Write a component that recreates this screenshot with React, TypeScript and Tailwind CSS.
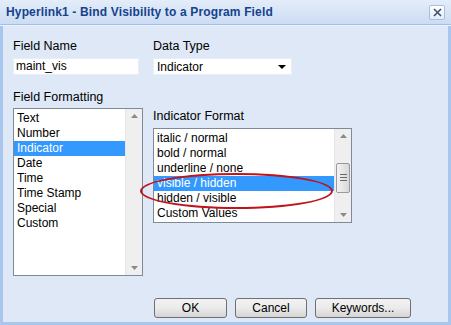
import React from 'react';

const font = { fontFamily: '"Liberation Sans", Arial, sans-serif' };

const UpArrow = () => (
  <svg width="7" height="4" viewBox="0 0 7 4"><path d="M0 4 L3.5 0 L7 4 Z" fill="#8a8a8a" /></svg>
);
const DownArrow = () => (
  <svg width="7" height="4" viewBox="0 0 7 4"><path d="M0 0 L3.5 4 L7 0 Z" fill="#8a8a8a" /></svg>
);

const ListBox: React.FC<{
  items: string[];
  selected: number;
  className: string;
  thumb?: boolean;
}> = ({ items, selected, className, thumb }) => (
  <div className={`flex border border-[#7f8a99] bg-white ${className}`}>
    <div className="flex-1 pt-[2px] overflow-hidden">
      {items.map((t, i) => (
        <div
          key={t}
          className={`h-[15px] leading-[15px] pl-[3px] text-[12px] whitespace-nowrap ${
            i === selected ? 'bg-[#3399ff] text-white' : 'text-black'
          }`}
        >
          {t}
        </div>
      ))}
    </div>
    <div className="w-[17px] bg-[#efefef] border-l border-[#e6e6e6] flex flex-col items-center py-[5px]">
      <UpArrow />
      <div className="flex-1 w-full flex flex-col justify-center">
        {thumb && (
          <div className="mx-[1px] h-[30px] mt-[4px] rounded-[2px] border border-[#9a9a9a] bg-gradient-to-r from-[#f3f3f3] to-[#d8d8d8] flex flex-col items-center justify-center gap-[2px]">
            <div className="w-[7px] h-[1px] bg-[#6b6b6b]" />
            <div className="w-[7px] h-[1px] bg-[#6b6b6b]" />
            <div className="w-[7px] h-[1px] bg-[#6b6b6b]" />
          </div>
        )}
      </div>
      <DownArrow />
    </div>
  </div>
);

const Button: React.FC<{ label: string; w: string }> = ({ label, w }) => (
  <button
    className={`${w} h-[20px] rounded-[3px] border border-[#707070] bg-gradient-to-b from-[#f2f2f2] via-[#ebebeb] to-[#d5d5d5] text-[12px] text-black leading-none`}
  >
    {label}
  </button>
);

export default function App() {
  return (
    <div style={font} className="w-[451px] h-[325px] flex flex-col bg-[#a9c6ef] overflow-hidden">
      {/* Title bar */}
      <div className="h-[24px] shrink-0 flex items-center justify-between pl-[6px] pr-[6px] bg-gradient-to-b from-[#e4edf9] to-[#cbdcf3]">
        <span className="text-[12px] font-bold text-[#15428b] tracking-[0.15px]">
          Hyperlink1 - Bind Visibility to a Program Field
        </span>
        <div className="w-[16px] h-[15px] rounded-[2px] border border-[#a6bfe2] bg-gradient-to-b from-white to-[#e3ecf8] flex items-center justify-center">
          <svg width="9" height="9" viewBox="0 0 9 9">
            <path d="M1 1 L8 8 M8 1 L1 8" stroke="#3b4f6e" strokeWidth="1.6" />
          </svg>
        </div>
      </div>
      <div className="h-[1px] bg-[#a3c0ec]" />
      <div className="h-[1px] bg-[#eaf1fb]" />
      {/* Body */}
      <div className="flex-1 mx-[3px] mb-[3px] bg-[#dfe8f6] pl-[10px] pt-[13px] flex flex-col">
        <div className="flex gap-[14px]">
          <div className="w-[126px] flex flex-col">
            <div className="text-[12.5px] text-black h-[15px] leading-[15px]">Field Name</div>
            <div className="mt-[4px] h-[17px] bg-white border border-[#e8eef8] pl-[2px] text-[12px] leading-[15px]">maint_vis</div>
          </div>
          <div className="w-[139px] flex flex-col">
            <div className="text-[12.5px] text-black h-[15px] leading-[15px]">Data Type</div>
            <div className="mt-[4px] h-[17px] bg-white border border-[#e8eef8] pl-[3px] pr-[5px] flex items-center justify-between text-[12px]">
              <span>Indicator</span>
              <svg width="8" height="4" viewBox="0 0 8 4"><path d="M0 0 L4 4 L8 0 Z" fill="#000" /></svg>
            </div>
          </div>
        </div>
        <div className="flex gap-[10px] mt-[15px]">
          <div className="flex flex-col">
            <div className="text-[12.5px] text-black h-[15px] leading-[15px]">Field Formatting</div>
            <ListBox
              className="mt-[3px] w-[130px] h-[168px]"
              items={['Text', 'Number', 'Indicator', 'Date', 'Time', 'Time Stamp', 'Special', 'Custom']}
              selected={2}
            />
          </div>
          <div className="flex flex-col pt-[19px] relative">
            <div className="text-[12.5px] text-black h-[15px] leading-[15px]">Indicator Format</div>
            <ListBox
              className="mt-[4px] w-[199px] h-[95px]"
              items={['italic / normal', 'bold / normal', 'underline / none', 'visible / hidden', 'hidden / visible', 'Custom Values']}
              selected={3}
              thumb
            />
            <div className="absolute left-[-13px] top-[83px] w-[193px] h-[36px] rounded-[50%] border-2 border-[#c0141c]" />
          </div>
        </div>
        <div className="flex-1" />
        <div className="flex gap-[8px] pl-[141px] pb-[4px]">
          <Button label="OK" w="w-[73px]" />
          <Button label="Cancel" w="w-[72px]" />
          <Button label="Keywords..." w="w-[96px]" />
        </div>
      </div>
    </div>
  );
}
